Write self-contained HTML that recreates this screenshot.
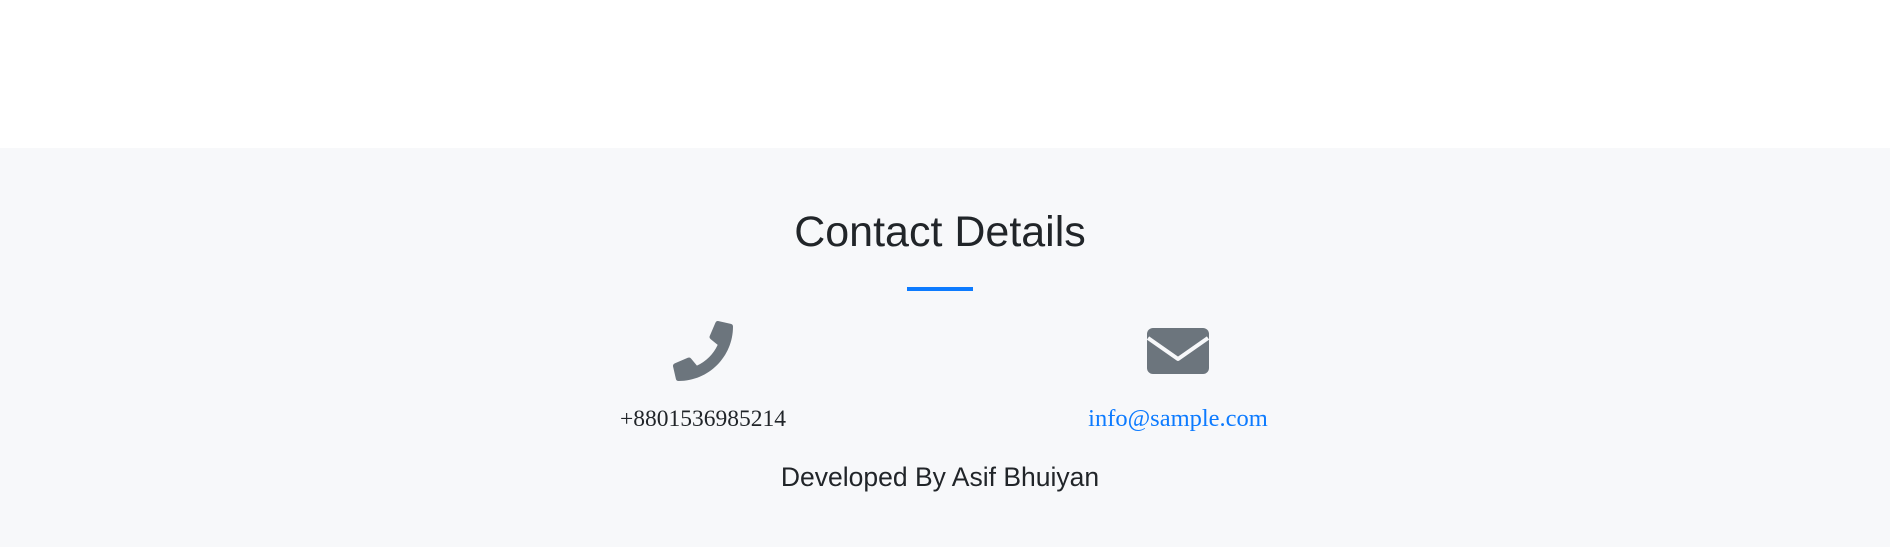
<!DOCTYPE html>
<html><head><meta charset="utf-8"><style>
html,body{margin:0;padding:0;width:1890px;height:547px;background:#fff;overflow:hidden}
.sec{position:absolute;left:0;top:148px;width:1890px;height:399px;background:#f7f8fa}
.t{position:absolute;white-space:nowrap;transform:translateX(-50%)}
</style></head><body>
<div class="sec"></div>
<div class="t" style="left:940px;top:207px;font:43px 'Liberation Sans',sans-serif;color:#212529;line-height:50px">Contact Details</div>
<div style="position:absolute;left:907px;top:287px;width:66px;height:4px;background:#0d7bff"></div>
<svg style="position:absolute;left:673px;top:321px" width="60" height="60" viewBox="0 0 512 512"><g transform="translate(512,0) scale(-1,1)"><path fill="#6c757d" d="M497.39 361.8l-112-48a24 24 0 0 0-28 6.9l-49.6 60.6A370.66 370.66 0 0 1 130.6 204.11l60.6-49.6a23.94 23.94 0 0 0 6.9-28l-48-112A24.16 24.16 0 0 0 122.6.61l-104 24A24 24 0 0 0 0 48c0 256.5 207.9 464 464 464a24 24 0 0 0 23.4-18.6l24-104a24.29 24.29 0 0 0-14.01-27.6z"/></g></svg>
<svg style="position:absolute;left:1147px;top:328px" width="62" height="46" viewBox="0 0 62 46"><rect x="0" y="0" width="62" height="46" rx="6" fill="#6c757d"/><path d="M1 10 L31 31 L61 10" fill="none" stroke="#f7f8fa" stroke-width="4" stroke-linejoin="round"/></svg>
<div class="t" style="left:703px;top:405px;font:23.5px 'Liberation Serif',serif;color:#212529;line-height:28px">+8801536985214</div>
<div class="t" style="left:1178px;top:405px;font:24.5px 'Liberation Serif',serif;color:#0d7bff;line-height:28px">info@sample.com</div>
<div class="t" style="left:940px;top:462px;font:26.5px 'Liberation Sans',sans-serif;color:#212529;line-height:30px">Developed By Asif Bhuiyan</div>
</body></html>
